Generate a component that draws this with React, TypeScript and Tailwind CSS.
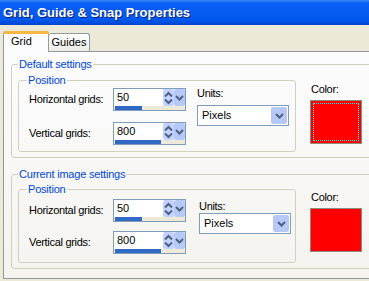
import React from 'react';

const UI = "font-['Liberation_Sans',Arial,sans-serif]";

function Chevron() {
  return (
    <svg width="9" height="6" viewBox="0 0 9 6">
      <path d="M1 1 L4.5 4.5 L8 1" fill="none" stroke="#4d6185" strokeWidth="2" />
    </svg>
  );
}

function UpDown() {
  return (
    <svg width="9" height="14" viewBox="0 0 9 14">
      <path d="M1 5.5 L4.5 2 L8 5.5" fill="none" stroke="#4d6185" strokeWidth="2" />
      <path d="M1 8.5 L4.5 12 L8 8.5" fill="none" stroke="#4d6185" strokeWidth="2" />
    </svg>
  );
}

function Spin({ value, fill }: { value: string; fill: number }) {
  return (
    <div className="flex h-[23px] w-[73px] flex-col border border-[#7f9db9] bg-white">
      <div className="flex h-[17px]">
        <span className="flex-1 pl-[3px] pt-[2px] text-[11px] leading-[13px] text-black">{value}</span>
        <div className="flex w-[11px] items-center justify-center rounded-[2px] bg-[#c3d3fd]">
          <UpDown />
        </div>
        <div className="flex w-[11px] items-center justify-center rounded-[2px] bg-[#b6c9f6]">
          <Chevron />
        </div>
      </div>
      <div className="mt-auto h-[4px] bg-[#ece9d8] pl-px">
        <div className="h-full bg-[#316ac5]" style={{ width: fill }} />
      </div>
    </div>
  );
}

function Select() {
  return (
    <div className="flex h-[21px] w-[92px] items-center border border-[#7f9db9] bg-white p-px">
      <span className="flex-1 pl-[3px] text-[11px] text-black">Pixels</span>
      <div className="flex h-full w-[16px] items-center justify-center rounded-[2px] bg-[#b6c9f6]">
        <Chevron />
      </div>
    </div>
  );
}

const label = 'whitespace-nowrap text-[11px] leading-[13px] tracking-[-0.3px] text-black';
const legend = 'whitespace-nowrap text-[11px] leading-[13px] tracking-[-0.2px] text-[#0046d5]';

function Group({
  title,
  focused,
  innerClass,
  rowsClass,
  unitsClass,
  colorClass,
}: {
  title: string;
  focused: boolean;
  innerClass: string;
  rowsClass: string;
  unitsClass: string;
  colorClass: string;
}) {
  return (
    <fieldset className="-mr-[20px] rounded-[3px] border border-[#d0d0bf] px-[6px] pb-[5px]">
      <legend className={`px-[1px] ${legend}`}>{title}</legend>
      <div className="flex items-start">
        <fieldset className={`w-[278px] rounded-[3px] border border-[#d0d0bf] pl-[10px] ${innerClass}`}>
          <legend className={`-ml-[2px] px-[1px] ${legend}`}>Position</legend>
          <div className="flex">
            <div className={`flex flex-col ${rowsClass}`}>
              <div className="flex items-center">
                <span className={`w-[84px] ${label}`}>Horizontal grids:</span>
                <Spin value="50" fill={27} />
              </div>
              <div className="flex items-center">
                <span className={`w-[84px] ${label}`}>Vertical grids:</span>
                <Spin value="800" fill={46} />
              </div>
            </div>
            <div className={`flex flex-col ${unitsClass}`}>
              <span className={label}>Units:</span>
              <Select />
            </div>
          </div>
        </fieldset>
        <div className={`ml-[14px] flex flex-col ${colorClass}`}>
          <span className={`pl-px ${label}`}>Color:</span>
          <div className="mt-[4px] h-[44px] w-[52px] border border-[#8c8c80] bg-[#ff0000] p-[2px]">
            {focused && <div className="h-full w-full border border-dotted border-[#00ffff]" />}
          </div>
        </div>
      </div>
    </fieldset>
  );
}

export default function App() {
  return (
    <div className={`flex h-[281px] w-[369px] flex-col overflow-hidden bg-[#ece9d8] ${UI}`}>
      {/* Title bar */}
      <div className="flex h-[25px] shrink-0 items-center bg-[linear-gradient(to_bottom,#3c8cf8_0%,#0a5ef5_12%,#0058ee_80%,#0044cc_100%)] pl-[3px]">
        <span className="text-[13px] font-bold text-white [text-shadow:1px_1px_0_#0a1f6e]">
          Grid, Guide &amp; Snap Properties
        </span>
      </div>

      {/* Tabs */}
      <div className="flex shrink-0 items-end pl-[3px] pt-[6px]">
        <div className="relative z-10 -mb-px flex h-[21px] w-[46px] flex-col rounded-t-[3px] border border-b-0 border-[#919b9c] bg-[#fcfcfe]">
          <div className="-mx-px -mt-px h-[3px] rounded-t-[3px] bg-[#f7b843]" />
          <span className="pl-[7px] pt-[1px] text-[11px] leading-[13px] text-black">Grid</span>
        </div>
        <div className="flex h-[18px] w-[41px] items-center justify-center rounded-t-[3px] border border-b-0 border-l-0 border-[#919b9c] bg-[linear-gradient(to_bottom,#ffffff,#ecebe6)]">
          <span className="text-[11px] text-black">Guides</span>
        </div>
      </div>

      {/* Panel */}
      <div className="mb-[2px] ml-[3px] flex flex-1 flex-col gap-[10px] border-t border-b border-l border-[#919b9c] bg-[linear-gradient(to_bottom,#fcfcfe,#f4f3ee)] pl-[7px] pt-[6px]">
        <Group
          title="Default settings"
          focused
          innerClass="mt-[3px] pb-[6px]"
          rowsClass="gap-[11px] pt-[1px]"
          unitsClass="ml-[11px] gap-[5px]"
          colorClass="mt-[12px]"
        />
        <Group
          title="Current image settings"
          focused={false}
          innerClass="mt-[2px] pb-[8px]"
          rowsClass="gap-[9px] pt-[3px]"
          unitsClass="ml-[13px] mt-[4px]"
          colorClass="mt-[10px]"
        />
      </div>
    </div>
  );
}
